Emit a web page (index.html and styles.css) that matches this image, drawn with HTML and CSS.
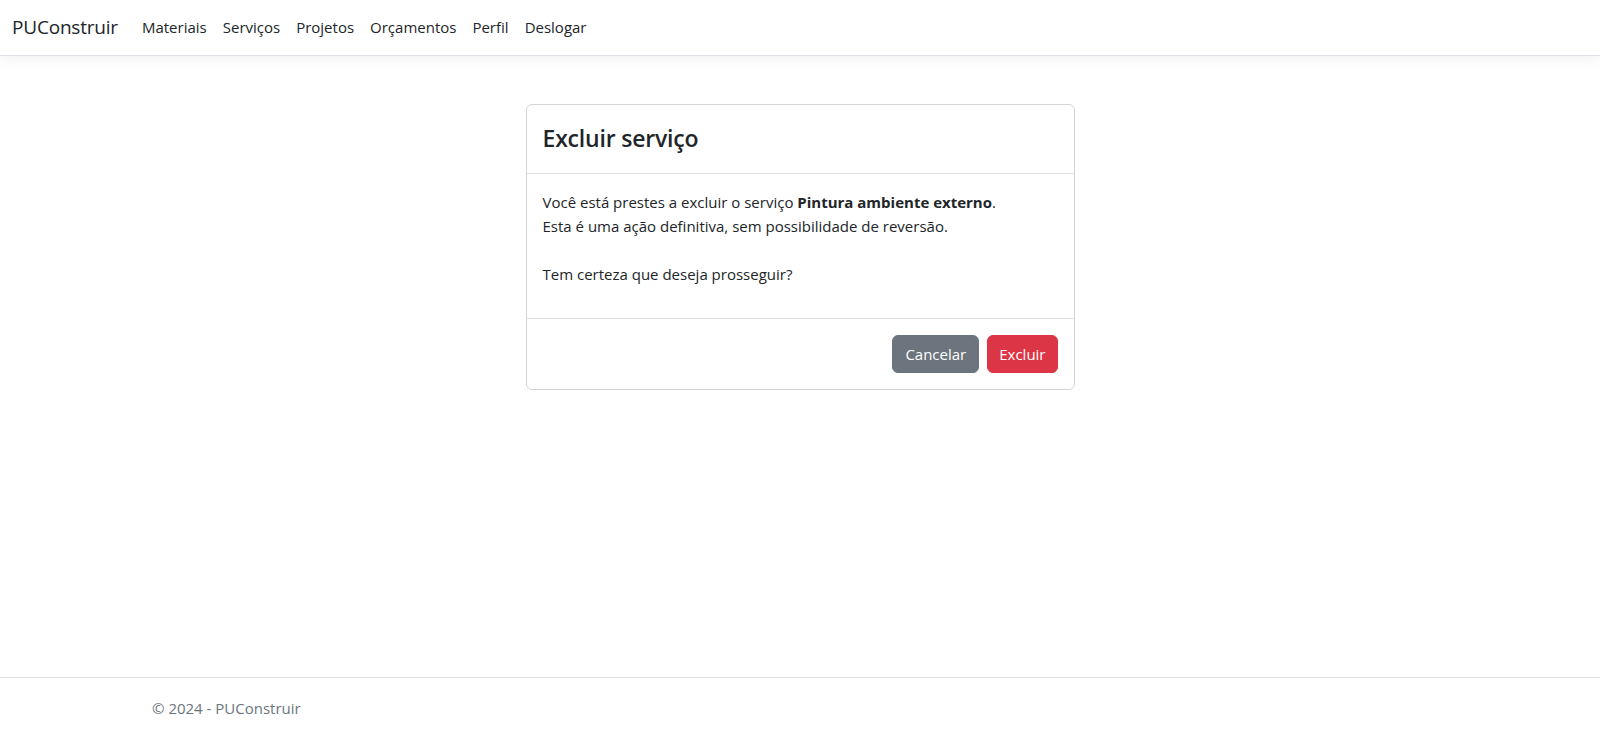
FILE: index.html
```html
<!DOCTYPE html>
<html lang="pt-BR">
<head>
<meta charset="utf-8">
<title>Excluir serviço - PUConstruir</title>
<link rel="stylesheet" href="styles.css">
</head>
<body>
<div class="page">
  <header class="navbar">
    <a class="brand" href="#">PUConstruir</a>
    <nav class="nav">
      <a class="nav-link" href="#">Materiais</a>
      <a class="nav-link" href="#">Serviços</a>
      <a class="nav-link" href="#">Projetos</a>
      <a class="nav-link" href="#">Orçamentos</a>
      <a class="nav-link" href="#">Perfil</a>
      <a class="nav-link" href="#">Deslogar</a>
    </nav>
  </header>

  <main class="main">
    <div class="dialog">
      <div class="dialog-header">
        <h4 class="dialog-title">Excluir serviço</h4>
      </div>
      <div class="dialog-body">
        <p>Você está prestes a excluir o serviço <strong>Pintura ambiente externo</strong>.<br>
        Esta é uma ação definitiva, sem possibilidade de reversão.<br><br>
        Tem certeza que deseja prosseguir?</p>
      </div>
      <div class="dialog-footer">
        <button class="btn btn-secondary" type="button">Cancelar</button>
        <button class="btn btn-danger" type="button">Excluir</button>
      </div>
    </div>
  </main>

  <footer class="footer">
    <div class="container">© 2024 - PUConstruir</div>
  </footer>
</div>
</body>
</html>
```

FILE: styles.css
```css
* { box-sizing: border-box; }

html, body {
  margin: 0;
  padding: 0;
}

body {
  font-family: "Open Sans", "Noto Sans", "Liberation Sans", sans-serif;
  font-size: 16px;
  line-height: 1.5;
  color: #212529;
  background: #fff;
}

.page {
  min-height: 738px;
  display: flex;
  flex-direction: column;
}

.navbar {
  display: flex;
  align-items: center;
  height: 56px;
  padding: 0 12px;
  border-bottom: 1px solid #dee2e6;
  box-shadow: 0 4px 12px rgba(0, 0, 0, 0.05);
  background: #fff;
}

.brand {
  font-size: 19px;
  color: #212529;
  text-decoration: none;
  margin-right: 16px;
  letter-spacing: -0.2px;
}

.nav {
  display: flex;
}

.nav-link {
  padding: 8px 8px;
  color: #212529;
  text-decoration: none;
  font-size: 15px;
  letter-spacing: 0;
}

.main {
  flex: 1;
  display: flex;
  justify-content: center;
  align-items: flex-start;
  padding-top: 48px;
}

.dialog {
  width: 549px;
  border: 1px solid #d3d4d5;
  border-radius: 6px;
  background: #fff;
}

.dialog-header {
  padding: 16px 16px 17px;
  border-bottom: 1px solid #dee2e6;
}

.dialog-title {
  margin: 0;
  font-size: 23px;
  font-weight: 600;
  line-height: 35px;
  letter-spacing: -0.2px;
}

.dialog-body {
  padding: 16px;
  font-size: 15px;
}

.dialog-body p {
  margin: 0 0 16px;
  line-height: 24px;
}

.dialog-body strong {
  font-weight: 700;
}

.dialog-footer {
  display: flex;
  justify-content: flex-end;
  gap: 8px;
  padding: 16px;
  border-top: 1px solid #dee2e6;
}

.btn {
  font-family: inherit;
  font-size: 15px;
  line-height: 24px;
  height: 38px;
  padding: 6px 12px;
  border: 1px solid transparent;
  border-radius: 6px;
  color: #fff;
  cursor: pointer;
}

.btn-secondary {
  background: #6c757d;
  border-color: #6c757d;
}

.btn-danger {
  background: #dc3545;
  border-color: #dc3545;
  padding: 6px 11px;
}

.footer {
  border-top: 1px solid #dee2e6;
  line-height: 60px;
  height: 61px;
  color: #6c757d;
  font-size: 15px;
}

.container {
  max-width: 1320px;
  margin: 0 auto;
  padding: 0 12px;
}
```
